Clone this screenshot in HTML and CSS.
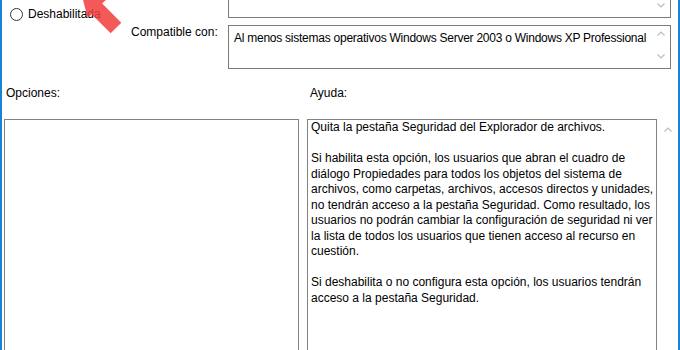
FILE: index.html
```html
<!DOCTYPE html>
<html lang="es">
<head>
  <meta charset="UTF-8">
  <title>Quitar la pestaña Seguridad</title>
  <link rel="stylesheet" href="styles.css">
</head>
<body>
  <div class="window">
    <!-- Estado y compatibilidad -->
    <section class="top">
      <label class="state"><span class="radio"></span>Deshabilitada</label>
      <div class="field field-comment">
        <div class="field-text"></div>
        <div class="scroll scroll-end">
          <svg class="chev" width="8" height="5" viewBox="0 0 8 5"><polyline points="0.5,0.5 4,4 7.5,0.5"/></svg>
        </div>
      </div>

      <div class="compat-label">Compatible con:</div>
      <div class="field field-compat">
        <div class="field-text compat-text">Al menos sistemas operativos Windows Server 2003 o Windows XP Professional</div>
        <div class="scroll">
          <svg class="chev" width="8" height="5" viewBox="0 0 8 5"><polyline points="0.5,4.5 4,1 7.5,4.5"/></svg>
          <svg class="chev" width="8" height="5" viewBox="0 0 8 5"><polyline points="0.5,0.5 4,4 7.5,0.5"/></svg>
        </div>
      </div>
    </section>

    <div class="labels">
      <span class="label-options">Opciones:</span>
      <span>Ayuda:</span>
    </div>

    <section class="panes">
      <div class="options"></div>
      <div class="help">
        <div class="help-text">
          <p>Quita la pestaña Seguridad del Explorador de archivos.</p>
          <p>Si habilita esta opción, los usuarios que abran el cuadro de<br>diálogo Propiedades para todos los objetos del sistema de<br>archivos, como carpetas, archivos, accesos directos y unidades,<br>no tendrán acceso a la pestaña Seguridad. Como resultado, los<br>usuarios no podrán cambiar la configuración de seguridad ni ver<br>la lista de todos los usuarios que tienen acceso al recurso en<br>cuestión.</p>
          <p>Si deshabilita o no configura esta opción, los usuarios tendrán<br>acceso a la pestaña Seguridad.</p>
        </div>
        <div class="help-scroll">
          <svg class="chev" width="8" height="5" viewBox="0 0 8 5"><polyline points="0.5,4.5 4,1 7.5,4.5"/></svg>
        </div>
      </div>
    </section>

    <!-- Flecha de marcado -->
    <svg class="arrow" width="50" height="40" viewBox="0 0 50 40">
      <polygon transform="translate(35 28) rotate(225)" points="0,-7.5 27,-7.5 27,-13 49,0 27,13 27,7.5 0,7.5"/>
    </svg>
  </div>
</body>
</html>
```

FILE: styles.css
```css
* {
  margin: 0;
  padding: 0;
  box-sizing: border-box;
}

:root {
  --accent: #1883d7;
  --frame: #7a7a7a;
  --chev: #bdbdbd;
}

body {
  background: #fff;
  color: #000;
  font-family: "Liberation Sans", Arial, sans-serif;
  font-size: 12px;
  overflow: hidden;
}

.window {
  position: relative;
  width: 680px;
  height: 350px;
  border-left: 2px solid var(--accent);
  border-right: 2px solid var(--accent);
  overflow: hidden;
}

/* Parte superior */
.top {
  display: grid;
  grid-template-columns: 226px 443px;
  row-gap: 7px;
}

.state {
  align-self: end;
  margin-bottom: -4px;
  display: flex;
  align-items: center;
  gap: 5px;
  padding-left: 8px;
  line-height: 16px;
}

.radio {
  width: 13px;
  height: 13px;
  border: 1px solid #333;
  border-radius: 50%;
}

.field {
  display: flex;
  border: 1px solid var(--frame);
  height: 44px;
}

.field-comment {
  margin-top: -26px;
}

.field-text {
  flex: 1;
  padding: 4px 0 0 5px;
  line-height: 16px;
  white-space: nowrap;
}

.compat-text {
  letter-spacing: -0.25px;
}

.scroll {
  width: 19px;
  display: flex;
  flex-direction: column;
  align-items: center;
  justify-content: space-between;
  padding: 5px 0 9px;
}

.scroll-end {
  justify-content: flex-end;
}

.chev polyline {
  fill: none;
  stroke: var(--chev);
  stroke-width: 1.2;
}

.compat-label {
  padding-left: 129px;
  margin-top: -1px;
  line-height: 16px;
}

/* Etiquetas */
.labels {
  display: flex;
  margin-top: 16px;
  line-height: 16px;
}

.label-options {
  width: 308px;
  padding-left: 4px;
}

/* Paneles */
.panes {
  display: flex;
  margin-top: 18px;
  padding-left: 2px;
  height: 260px;
}

.options {
  width: 295px;
  margin-right: 8px;
  border: 1px solid #828282;
}

.help {
  display: flex;
}

.help-text {
  width: 350px;
  border: 1px solid #828282;
  padding-left: 3px;
  line-height: 15.5px;
  white-space: nowrap;
}

.help-text p {
  margin-bottom: 15.5px;
}

.help-scroll {
  width: 21px;
  display: flex;
  justify-content: center;
  padding-top: 8px;
}

.arrow {
  position: absolute;
  left: 79px;
  top: 0;
}

.arrow polygon {
  fill: #f23c3c;
  opacity: 0.85;
}
```
